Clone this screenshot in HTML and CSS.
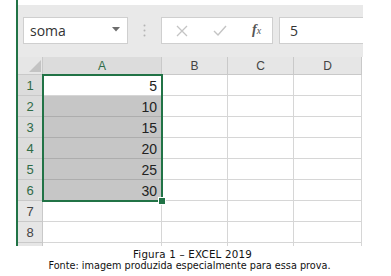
FILE: index.html
```html
<!DOCTYPE html>
<html>
<head>
<meta charset="utf-8">
<link rel="stylesheet" href="styles.css">
</head>
<body>
<div class="sheet">
  <div class="toolbar">
    <div class="namebox">
      <span class="name">soma</span>
      <svg class="caret" width="8" height="5" viewBox="0 0 8 5"><path d="M0 0H8L4 4.5Z" fill="#6d6d6d"/></svg>
    </div>
    <div class="grip">
      <svg width="3" height="13" viewBox="0 0 3 13"><circle cx="1.5" cy="1.5" r="1" fill="#b4b4b4"/><circle cx="1.5" cy="6.5" r="1" fill="#b4b4b4"/><circle cx="1.5" cy="11.5" r="1" fill="#b4b4b4"/></svg>
    </div>
    <div class="fbuttons">
      <svg class="ico" width="12" height="12" viewBox="0 0 12 12"><path d="M1 1L11 11M11 1L1 11" stroke="#c4c4c4" stroke-width="1.3" fill="none"/></svg>
      <svg class="ico" width="14" height="11" viewBox="0 0 14 11"><path d="M1 6L5 10L13 1" stroke="#c4c4c4" stroke-width="1.4" fill="none"/></svg>
      <span class="fx">f<span class="x">x</span></span>
    </div>
    <div class="fvalue">5</div>
  </div>
  <div class="grid">
    <div class="hd corner"><span class="tri"></span></div>
    <div class="hd col sel">A</div>
    <div class="hd col">B</div>
    <div class="hd col">C</div>
    <div class="hd col">D</div>

    <div class="hd row sel">1</div><div class="c num">5</div><div class="c"></div><div class="c"></div><div class="c"></div>
    <div class="hd row sel">2</div><div class="c num hl">10</div><div class="c"></div><div class="c"></div><div class="c"></div>
    <div class="hd row sel">3</div><div class="c num hl">15</div><div class="c"></div><div class="c"></div><div class="c"></div>
    <div class="hd row sel">4</div><div class="c num hl">20</div><div class="c"></div><div class="c"></div><div class="c"></div>
    <div class="hd row sel">5</div><div class="c num hl">25</div><div class="c"></div><div class="c"></div><div class="c"></div>
    <div class="hd row sel">6</div><div class="c num hl">30</div><div class="c"></div><div class="c"></div><div class="c"></div>
    <div class="hd row">7</div><div class="c"></div><div class="c"></div><div class="c"></div><div class="c"></div>
    <div class="hd row">8</div><div class="c"></div><div class="c"></div><div class="c"></div><div class="c"></div>
    <div class="hd row tail"></div><div class="c tail"></div><div class="c tail"></div><div class="c tail"></div><div class="c tail"></div>

    <div class="selection"><span class="handle"></span></div>
  </div>
</div>
<div class="caption">
  <div class="l1">Figura 1 – EXCEL 2019</div>
  <div>Fonte: imagem produzida especialmente para essa prova.</div>
</div>
</body>
</html>
```

FILE: styles.css
```css
html, body {
  margin: 0;
  padding: 0;
  background: #ffffff;
}
body {
  width: 391px;
  height: 276px;
  overflow: hidden;
}
.sheet {
  margin-left: 16px;
  width: 345px;
  height: 246px;
  border-left: 2px solid #217346;
  display: flex;
  flex-direction: column;
}
.toolbar {
  margin-top: 5px;
  height: 52px;
  background: #e9e9e9;
  display: flex;
  align-items: flex-start;
  padding: 12px 0 0 5px;
  box-sizing: border-box;
}
.namebox {
  width: 105px;
  height: 27px;
  box-sizing: border-box;
  background: #fff;
  border: 1px solid #cfcfcf;
  display: flex;
  align-items: center;
  justify-content: space-between;
  padding: 0 7px 0 6px;
  font-family: "Open Sans", "Liberation Sans", sans-serif;
  font-size: 14px;
  color: #333;
}
.caret { margin-top: -3px; }
.grip {
  width: 33px;
  height: 27px;
  display: flex;
  align-items: center;
  justify-content: center;
}
.fbuttons {
  width: 112px;
  height: 27px;
  box-sizing: border-box;
  background: #fff;
  border: 1px solid #cfcfcf;
  display: flex;
  align-items: center;
  padding: 0 10px 0 14px;
}
.fbuttons .ico:nth-child(1) { margin-right: 25px; }
.fbuttons .ico:nth-child(2) { margin-right: 25px; }
.fx {
  font-family: "Liberation Serif", serif;
  font-style: italic;
  font-weight: bold;
  font-size: 14px;
  color: #555;
  margin-top: -2px;
}
.fx .x { font-size: 10px; font-weight: normal; }
.fvalue {
  margin-left: 6px;
  flex: 1;
  height: 27px;
  box-sizing: border-box;
  background: #fff;
  border: 1px solid #cfcfcf;
  border-right: none;
  padding-left: 10px;
  font-family: "Open Sans", "Liberation Sans", sans-serif;
  font-size: 14px;
  line-height: 25px;
  color: #333;
}
.grid {
  position: relative;
  display: grid;
  grid-template-columns: 25px 119px 66px 66px 68px;
  grid-template-rows: 18px repeat(8, 21px) 3px;
  font-family: "Liberation Sans", Arial, sans-serif;
}
.hd {
  background: #e6e6e6;
  box-sizing: border-box;
  border-right: 1px solid #c9c9c9;
  border-bottom: 1px solid #c9c9c9;
  color: #444;
  font-size: 12px;
  display: flex;
  align-items: center;
  justify-content: center;
}
.hd.sel { color: #2f6b47; background: #dcdcdc; }
.hd.row { font-size: 13px; }
.corner {
  position: relative;
  background: #e6e6e6;
}
.tri {
  position: absolute;
  right: 1px;
  bottom: 2px;
  width: 0;
  height: 0;
  border-left: 12px solid transparent;
  border-bottom: 12px solid #c3c3c3;
}
.c {
  box-sizing: border-box;
  border-right: 1px solid #d6d6d6;
  border-bottom: 1px solid #d6d6d6;
  background: #fff;
}
.num {
  display: flex;
  align-items: flex-end;
  justify-content: flex-end;
  padding: 0 4px 1px 0;
  font-size: 14px;
  color: #222;
}
.hl { background: #c6c6c6; border-bottom-color: #adadad; }
.tail { border-bottom: none; }
.selection {
  position: absolute;
  left: 24px;
  top: 17px;
  width: 121px;
  height: 128px;
  box-sizing: border-box;
  border: 2px solid #217346;
  pointer-events: none;
}
.handle {
  position: absolute;
  right: -5px;
  bottom: -5px;
  width: 6px;
  height: 6px;
  background: #217346;
  border: 1px solid #fff;
}
.caption {
  margin-top: 2px;
  text-align: center;
  font-family: "DejaVu Sans", Verdana, sans-serif;
  font-size: 9.7px;
  line-height: 12px;
  color: #111;
  padding-right: 12px;
}
.caption .l1 { font-size: 10.3px; letter-spacing: 0.2px; padding-left: 6px; }
```
